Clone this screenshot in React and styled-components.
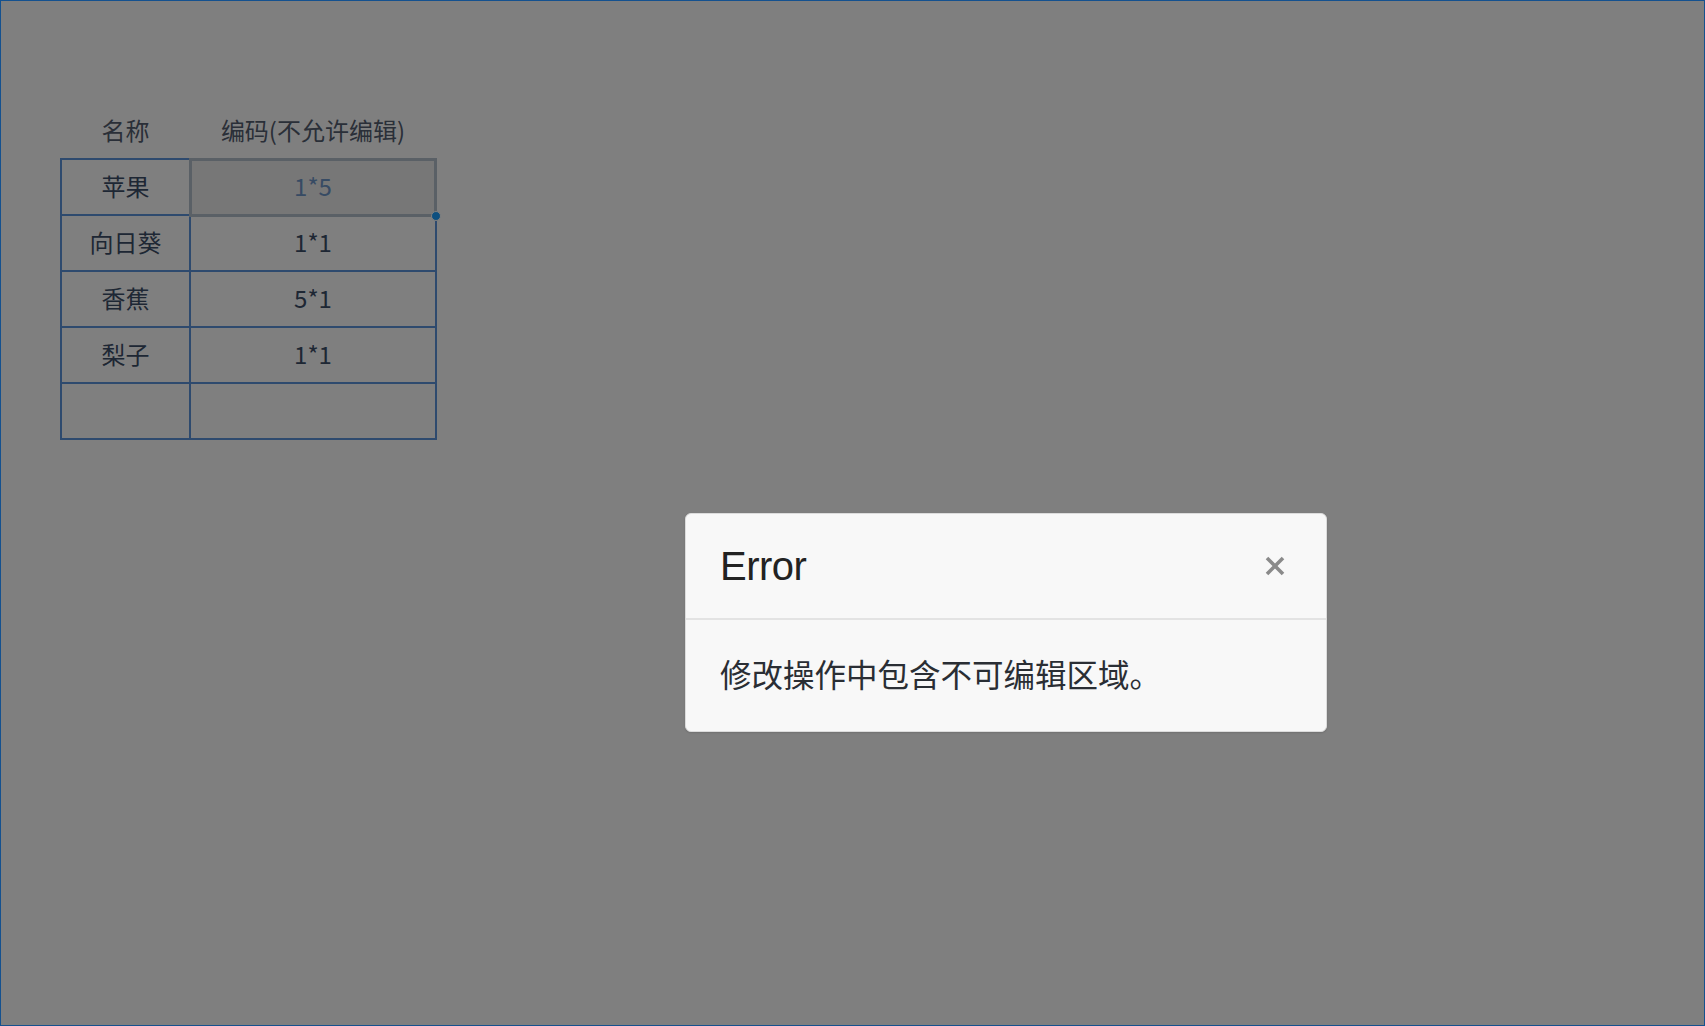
import React from 'react';
import styled, { createGlobalStyle } from 'styled-components';

const GlobalStyle = createGlobalStyle`
  html, body {
    margin: 0;
    padding: 0;
    height: 100%;
  }
  body {
    font-family: "Noto Sans CJK SC", "Liberation Sans", sans-serif;
    overflow: hidden;
  }
`;

const Frame = styled.div`
  position: relative;
  box-sizing: border-box;
  width: 100vw;
  height: 100vh;
  background: #ffffff;
  border: 1px solid #14518f;
  padding: 101px 0 0 59px;
`;

const Sheet = styled.table`
  border-collapse: collapse;
  table-layout: fixed;
  font-family: "Noto Sans CJK SC", "Open Sans", sans-serif;
  font-size: 24px;
`;

const HeadCell = styled.th`
  height: 54px;
  padding: 0 0 2px;
  font-weight: 400;
  color: #545e70;
  text-align: center;
  vertical-align: middle;
  width: ${(p) => p.$w}px;
`;

const Cell = styled.td`
  position: relative;
  height: 51px;
  padding: 0 0 3px;
  border: 2px solid #5c94dc;
  color: ${(p) => (p.$active ? '#6f96c8' : '#3c4e68')};
  background: ${(p) => (p.$active ? '#eeeeee' : 'transparent')};
  text-align: center;
  vertical-align: middle;
`;

const Selection = styled.div`
  position: absolute;
  inset: -2px -2px -3px -2px;
  border: 3px solid #b4c0cc;
  pointer-events: none;
`;

const FillHandle = styled.span`
  position: absolute;
  right: -7px;
  bottom: -7px;
  width: 8px;
  height: 8px;
  border-radius: 50%;
  background: #1a9eff;
  border: 1px solid #ffffff;
`;

const Backdrop = styled.div`
  position: absolute;
  inset: 0;
  background: rgba(0, 0, 0, 0.5);
`;

const Dialog = styled.div`
  position: absolute;
  left: 684px;
  top: 512px;
  width: 642px;
  box-sizing: border-box;
  background: #f8f8f8;
  border: 1px solid #dcdcdc;
  border-radius: 6px;
  box-shadow: 0 1px 2px rgba(0, 0, 0, 0.12);
  font-family: "Liberation Sans", "Noto Sans CJK SC", sans-serif;
`;

const DialogHeader = styled.div`
  display: flex;
  align-items: center;
  justify-content: space-between;
  height: 104px;
  padding: 0 40px 0 34px;
  border-bottom: 2px solid #e3e3e3;
`;

const Title = styled.h4`
  margin: 0;
  font-size: 40px;
  font-weight: 400;
  line-height: 1.1;
  color: #222222;
  letter-spacing: -0.5px;
`;

const CloseButton = styled.button`
  display: flex;
  align-items: center;
  justify-content: center;
  width: 22px;
  height: 22px;
  padding: 0;
  border: 0;
  background: transparent;
  cursor: pointer;
`;

const DialogBody = styled.div`
  padding: 32px 34px 37px;
  font-family: "Noto Sans CJK SC", "Liberation Sans", sans-serif;
  font-size: 31.5px;
  line-height: 42px;
  color: #2a2e34;
`;

const rows = [
  ['苹果', '1*5'],
  ['向日葵', '1*1'],
  ['香蕉', '5*1'],
  ['梨子', '1*1'],
  ['', ''],
];

function App() {
  return (
    <>
      <GlobalStyle />
      <Frame>
        <Sheet>
          <thead>
            <tr>
              <HeadCell $w={129}>名称</HeadCell>
              <HeadCell $w={246}>编码(不允许编辑)</HeadCell>
            </tr>
          </thead>
          <tbody>
            {rows.map((r, i) => (
              <tr key={i}>
                <Cell>{r[0]}</Cell>
                <Cell $active={i === 0}>
                  {r[1]}
                  {i === 0 && (
                    <Selection>
                      <FillHandle />
                    </Selection>
                  )}
                </Cell>
              </tr>
            ))}
          </tbody>
        </Sheet>

        <Backdrop />

        <Dialog role="dialog">
          <DialogHeader>
            <Title>Error</Title>
            <CloseButton aria-label="Close">
              <svg width="20" height="20" viewBox="0 0 20 20">
                <path d="M2 2 L18 18 M18 2 L2 18" stroke="#8a8a8a" strokeWidth="3.6" strokeLinecap="butt" />
              </svg>
            </CloseButton>
          </DialogHeader>
          <DialogBody>修改操作中包含不可编辑区域。</DialogBody>
        </Dialog>
      </Frame>
    </>
  );
}

export default App;
